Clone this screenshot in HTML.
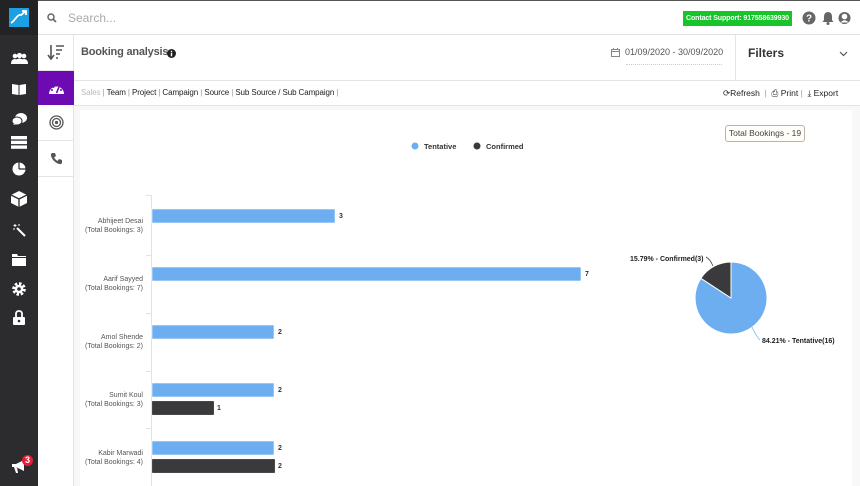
<!DOCTYPE html>
<html><head><meta charset="utf-8"><style>
*{margin:0;padding:0;box-sizing:border-box}
body{width:860px;height:486px;overflow:hidden;font-family:"Liberation Sans",sans-serif;background:#fff;position:relative}
.abs{position:absolute}
#side{left:0;top:0;width:38px;height:486px;background:#2c2c2e}
#logo{left:0;top:0;width:38px;height:35px;background:#232325}
#col2{left:38px;top:35px;width:36px;height:451px;background:#fff;border-right:1px solid #e4e4e4}
.c2{position:absolute;left:0;width:36px;border-bottom:1px solid #e4e4e4;display:flex;align-items:center;justify-content:center}
#top{left:38px;top:0;width:822px;height:35px;border-bottom:1px solid #e2e2e2;border-top:1px solid #555}
</style></head><body>
<div id="side" class="abs"></div>
<div id="logo" class="abs"><svg class="abs" style="left:9px;top:8px" width="20" height="19"><rect width="20" height="19" fill="#1ba1e2"/><path d="M2 15 C6 13 8 6 12 7 L17 3 M13 3 L17 3 L17 7" stroke="#fff" stroke-width="1.8" fill="none"/></svg></div>
<svg class="abs" style="left:11px;top:52px" width="17" height="12"><circle cx="4" cy="4" r="2.3" fill="#fff"/><circle cx="13" cy="4" r="2.3" fill="#fff"/><circle cx="8.5" cy="3.5" r="2.6" fill="#fff"/><path d="M0 12 Q0 7 4 7 Q8 7 8 12Z M9 12 Q9 7 13 7 Q17 7 17 12Z M4 12 Q4 6.5 8.5 6.5 Q13 6.5 13 12Z" fill="#fff"/></svg>
<svg class="abs" style="left:12px;top:83px" width="14" height="12"><path d="M0 1 L6.5 2 L6.5 12 L0 11Z M7.5 2 L14 1 L14 11 L7.5 12Z" fill="#fff"/></svg>
<svg class="abs" style="left:12px;top:112px" width="15" height="14"><ellipse cx="9" cy="6" rx="6" ry="5" fill="#fff"/><ellipse cx="5" cy="9" rx="5" ry="4" fill="#fff" stroke="#2c2c2e" stroke-width="1"/><path d="M1 13 L3 11 L5 12Z" fill="#fff"/></svg>
<svg class="abs" style="left:11px;top:136px" width="16" height="13"><rect y="0" width="16" height="3.4" fill="#fff"/><rect y="4.7" width="16" height="3.4" fill="#fff"/><rect y="9.4" width="16" height="3.4" fill="#fff"/></svg>
<svg class="abs" style="left:12px;top:162px" width="14" height="14"><circle cx="7" cy="7" r="6.5" fill="#fff"/><path d="M7 7 L7 0.5 M7 7 L13.5 7" stroke="#2c2c2e" stroke-width="1.2"/></svg>
<svg class="abs" style="left:11px;top:191px" width="16" height="16"><path d="M8 0 L16 4 L16 12 L8 16 L0 12 L0 4Z" fill="#fff"/><path d="M0 4 L8 8 L16 4 M8 8 L8 16" stroke="#2c2c2e" stroke-width="1.3" fill="none"/></svg>
<svg class="abs" style="left:12px;top:223px" width="14" height="14"><path d="M5 5 L13 13" stroke="#fff" stroke-width="2"/><path d="M3 1 L3 4 M1.5 2.5 L4.5 2.5 M7 1 L7 3 M1 6 L3 6" stroke="#fff" stroke-width="1"/></svg>
<svg class="abs" style="left:12px;top:254px" width="14" height="12"><path d="M0 0 L5 0 L6 2 L14 2 L14 12 L0 12Z" fill="#fff"/><path d="M0 3.5 L14 3.5" stroke="#2c2c2e"/></svg>
<svg class="abs" style="left:12px;top:282px" width="14" height="14"><circle cx="7" cy="7" r="5" fill="none" stroke="#fff" stroke-width="3.6" stroke-dasharray="2.3 1.6"/><circle cx="7" cy="7" r="4.3" fill="#fff"/><circle cx="7" cy="7" r="1.8" fill="#2c2c2e"/></svg>
<svg class="abs" style="left:13px;top:310px" width="12" height="15"><path d="M3 7 L3 4 Q3 1 6 1 Q9 1 9 4 L9 7" stroke="#fff" stroke-width="1.8" fill="none"/><rect y="7" width="12" height="8" rx="1" fill="#fff"/><circle cx="6" cy="11" r="1.3" fill="#2c2c2e"/></svg>
<svg class="abs" style="left:12px;top:460px" width="14" height="13"><path d="M0 4 L4 4 L12 0 L12 11 L4 7 L0 7Z M2 7 L4 13 L6 13 L5 7" fill="#fff"/></svg>
<div class="abs" style="left:22px;top:455px;width:11px;height:11px;border-radius:50%;background:#e0203a;color:#fff;font-size:9px;font-weight:bold;text-align:center;line-height:11px">3</div>

<div id="top" class="abs">
<svg class="abs" style="left:9px;top:12px" width="10" height="10"><circle cx="4" cy="4" r="3" stroke="#666" stroke-width="1.5" fill="none"/><path d="M6.3 6.3 L9 9" stroke="#666" stroke-width="1.6"/></svg>
<div class="abs" style="left:30px;top:10px;font-size:12px;color:#aaa">Search...</div>
<div class="abs" style="left:645px;top:10px;width:109px;height:15px;background:#17c429;color:#fff;font-size:7px;font-weight:bold;line-height:15px;text-align:center;white-space:nowrap;overflow:hidden;letter-spacing:-0.1px">Contact Support: 917558639930</div>
<svg class="abs" style="left:764px;top:10px" width="14" height="14"><circle cx="7" cy="7" r="6.5" fill="#666"/><text x="7" y="10.5" font-size="10" font-weight="bold" fill="#fff" text-anchor="middle" font-family="Liberation Sans">?</text></svg>
<svg class="abs" style="left:784px;top:10px" width="12" height="14"><path d="M6 1 Q2 1 2 6 L2 9 L0.5 11 L11.5 11 L10 9 L10 6 Q10 1 6 1Z" fill="#666"/><circle cx="6" cy="12.5" r="1.5" fill="#666"/></svg>
<svg class="abs" style="left:800px;top:10px" width="13" height="14"><circle cx="6.5" cy="7" r="6" fill="#666"/><circle cx="6.5" cy="5.5" r="2.8" fill="#fff"/><path d="M2.5 11.5 Q6.5 7 10.5 11.5" fill="#fff"/></svg>
</div>

<div id="col2" class="abs">
<div class="c2" style="top:0;height:36px"><svg width="18" height="17"><path d="M4 1 L4 14 M1 11 L4 15 L7 11" stroke="#555" stroke-width="1.6" fill="none"/><path d="M9 2 L17 2 M9 6 L15 6 M9 10 L13 10 M9 14 L11 14" stroke="#555" stroke-width="1.6"/></svg></div>
<div class="c2" style="top:36px;height:34px;background:#6d0bb3;border:none"><svg width="17" height="13"><path d="M1 12 A7.5 7.5 0 1 1 16 12Z" fill="#fff"/><path d="M8.5 11 L11 5" stroke="#6d0bb3" stroke-width="1.6"/><circle cx="4" cy="8" r="1" fill="#6d0bb3"/><circle cx="5.5" cy="5" r="1" fill="#6d0bb3"/><circle cx="8.5" cy="3.5" r="1" fill="#6d0bb3"/><circle cx="13" cy="8" r="1" fill="#6d0bb3"/></svg></div>
<div class="c2" style="top:70px;height:36px"><svg width="15" height="15"><circle cx="7.5" cy="7.5" r="6.5" stroke="#555" stroke-width="1.3" fill="none"/><circle cx="7.5" cy="7.5" r="4" stroke="#555" stroke-width="1.3" fill="none"/><circle cx="7.5" cy="7.5" r="1.6" fill="#555"/></svg></div>
<div class="c2" style="top:106px;height:36px"><svg width="13" height="13"><path d="M2 1 L5 1 L6 4 L4 5.5 Q5.5 8 7.5 9 L9 7 L12 8 L12 11 Q11 12.5 9 12 Q3 10 1 4 Q0.5 2 2 1Z" fill="#555"/></svg></div>
</div>

<div class="abs" style="left:74px;top:35px;width:786px;height:46px;border-bottom:1px solid #e4e4e4"></div>
<div class="abs" style="left:735px;top:35px;width:1px;height:46px;background:#e4e4e4"></div>
<div class="abs" style="left:81px;top:46px;font-size:11px;color:#555;font-weight:bold;letter-spacing:-0.2px;white-space:nowrap">Booking analysis</div>
<svg class="abs" style="left:167px;top:49px" width="9" height="9"><circle cx="4.5" cy="4.5" r="4.5" fill="#222"/><rect x="3.8" y="3.8" width="1.4" height="3.5" fill="#fff"/><circle cx="4.5" cy="2.4" r=".8" fill="#fff"/></svg>
<svg class="abs" style="left:611px;top:48px" width="9" height="9"><rect x=".5" y="1.5" width="8" height="7" fill="none" stroke="#888"/><path d="M.5 3.5 L8.5 3.5 M2.5 0 L2.5 2 M6.5 0 L6.5 2" stroke="#888"/></svg>
<div class="abs" style="left:625px;top:47px;font-size:9px;color:#555">01/09/2020 - 30/09/2020</div>
<div class="abs" style="left:626px;top:64px;width:96px;border-top:1px dotted #ccc"></div>
<div class="abs" style="left:748px;top:46px;font-size:12px;color:#333;font-weight:bold">Filters</div>
<svg class="abs" style="left:839px;top:51px" width="9" height="6"><path d="M1 1 L4.5 4.5 L8 1" stroke="#555" stroke-width="1.2" fill="none"/></svg>

<div class="abs" style="left:74px;top:81px;width:786px;height:25px;border-bottom:1px solid #e4e4e4"></div>
<div class="abs" style="left:81px;top:88px;font-size:8px;color:#222;white-space:nowrap;letter-spacing:-0.1px"><span style="color:#bbb">Sales</span> <span style="color:#999">|</span> Team <span style="color:#999">|</span> Project <span style="color:#999">|</span> Campaign <span style="color:#999">|</span> Source <span style="color:#999">|</span> Sub Source / Sub Campaign <span style="color:#999">|</span></div>
<div class="abs" style="left:723px;top:88px;font-size:8.5px;color:#222;white-space:nowrap">⟳Refresh &nbsp;<span style="color:#999">|</span> &nbsp;⎙ Print <span style="color:#999">|</span> &nbsp;⤓ Export</div>

<div class="abs" style="left:74px;top:106px;width:786px;height:380px;background:#f8f8f8"></div>
<div class="abs" style="left:80px;top:110px;width:772px;height:376px;background:#fff"></div>
<div class="abs" style="left:725px;top:125px;width:80px;height:17px;border:1px solid #bbb4a0;border-radius:3px;background:#fffef8;font-size:8.5px;color:#444;text-align:center;line-height:15px;white-space:nowrap">Total Bookings - 19</div>

<svg class="abs" style="left:0;top:0" width="860" height="486" font-family="Liberation Sans">
<circle cx="415" cy="146" r="3.5" fill="#6caef0"/><text x="424" y="149" font-size="7.5" font-weight="bold" fill="#333">Tentative</text>
<circle cx="477" cy="146" r="3.5" fill="#3a3a3c"/><text x="486" y="149" font-size="7.5" font-weight="bold" fill="#333">Confirmed</text>
<line x1="151.5" y1="195" x2="151.5" y2="486" stroke="#dde3ee"/>
<g stroke="#dde3ee"><line x1="146" y1="195.5" x2="151" y2="195.5"/><line x1="146" y1="255.5" x2="151" y2="255.5"/><line x1="146" y1="313.5" x2="151" y2="313.5"/><line x1="146" y1="371.5" x2="151" y2="371.5"/><line x1="146" y1="428.5" x2="151" y2="428.5"/></g>
<g font-size="7" fill="#555" text-anchor="end">
<text x="143" y="223">Abhijeet Desai</text><text x="143" y="232">(Total Bookings: 3)</text>
<text x="143" y="281">Aarif Sayyed</text><text x="143" y="290">(Total Bookings: 7)</text>
<text x="143" y="339">Amol Shende</text><text x="143" y="348">(Total Bookings: 2)</text>
<text x="143" y="397">Sumit Koul</text><text x="143" y="406">(Total Bookings: 3)</text>
<text x="143" y="455">Kabir Marwadi</text><text x="143" y="464">(Total Bookings: 4)</text>
</g>
<g fill="#6caef0" stroke="#fff" stroke-width=".6">
<rect x="152" y="209" width="183" height="14"/><rect x="152" y="267" width="429" height="14"/><rect x="152" y="325" width="122" height="14"/><rect x="152" y="383" width="122" height="14"/><rect x="152" y="441" width="122" height="14"/></g>
<g fill="#3a3a3c" stroke="#111" stroke-width=".6">
<rect x="152.5" y="401.5" width="61" height="13"/><rect x="152.5" y="459.5" width="122" height="13"/></g>
<g font-size="7" font-weight="bold" fill="#333">
<text x="339" y="218">3</text><text x="585" y="276">7</text><text x="278" y="334">2</text><text x="278" y="392">2</text><text x="217" y="410">1</text><text x="278" y="450">2</text><text x="278" y="468">2</text></g>
<path d="M731 298 L731 262 A36 36 0 1 1 700.9 278.3Z" fill="#6caef0" stroke="#fff" stroke-width="1"/>
<path d="M731 298 L700.9 278.3 A36 36 0 0 1 731 262Z" fill="#3a3a3c" stroke="#fff" stroke-width="1"/>
<path d="M713 266 Q710 259 706 257" stroke="#333" fill="none" stroke-width=".7"/>
<path d="M752 327 Q756 336 760 340" stroke="#6caef0" fill="none" stroke-width=".7"/>
<g font-size="7" font-weight="bold" fill="#222"><text x="630" y="261">15.79% - Confirmed(3)</text><text x="762" y="343">84.21% - Tentative(16)</text></g>
</svg>
</body></html>
